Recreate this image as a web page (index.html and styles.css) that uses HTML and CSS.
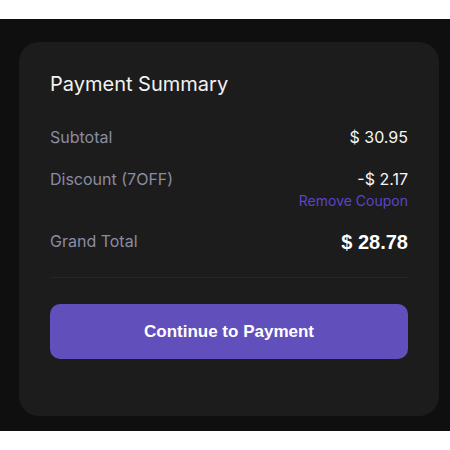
FILE: index.html
```html
<!DOCTYPE html>
<html lang="en">
<head>
    <meta charset="UTF-8">
    <meta name="viewport" content="width=device-width, initial-scale=1.0">
    <title>Payment Summary</title>
    <link rel="stylesheet" href="styles.css">
</head>
<body>

    <div class="page">
        <div class="summary-card">
            <h2>Payment Summary</h2>

            <div class="row">
                <span class="label">Subtotal</span>
                <span class="value">$ 30.95</span>
            </div>

            <div class="row">
                <span class="label">Discount (7OFF)</span>
                <div class="value-group">
                    <span class="value">-$ 2.17</span>
                    <a href="#" class="remove-link">Remove Coupon</a>
                </div>
            </div>

            <div class="row total-row">
                <span class="label">Grand Total</span>
                <span class="total">$ 28.78</span>
            </div>

            <button class="pay-button">Continue to Payment</button>
        </div>
    </div>

</body>
</html>
```

FILE: styles.css
```css
/* Basic Reset */
* {
    margin: 0;
    padding: 0;
    box-sizing: border-box;
}

body {
    font-family: 'Inter', 'Liberation Sans', sans-serif;
    background: #fff;
}

/* Dark band behind the card */
.page {
    margin-top: 19px;
    height: 412px;
    background: #0f0f0f;
    padding: 23px 11px 0 19px;
}

.summary-card {
    background: #1c1c1c;
    border-radius: 20px;
    padding: 30px 31px 57px;
    display: flex;
    flex-direction: column;
}

h2 {
    font-size: 20px;
    font-weight: 400;
    color: #f2f2f2;
    margin-bottom: 31px;
}

.row {
    display: flex;
    justify-content: space-between;
    align-items: flex-start;
    margin-bottom: 22px;
}

.label {
    font-size: 16px;
    color: #8a8ca3;
}

.value {
    font-size: 16px;
    color: #f5f5f5;
}

.value-group {
    display: flex;
    flex-direction: column;
    align-items: flex-end;
}

.remove-link {
    font-size: 14px;
    color: #5b45c6;
    text-decoration: none;
    margin-top: 3px;
}

.total-row {
    padding-bottom: 23px;
    border-bottom: 1px solid #262626;
    margin-bottom: 26px;
}

.total {
    font-family: 'Liberation Sans', sans-serif;
    font-size: 20px;
    font-weight: 700;
    color: #fff;
}

.pay-button {
    height: 55px;
    background: #614fbc;
    color: #fff;
    font-family: 'Liberation Sans', sans-serif;
    font-size: 17px;
    font-weight: 700;
    border: none;
    border-radius: 10px;
    cursor: pointer;
}
```
